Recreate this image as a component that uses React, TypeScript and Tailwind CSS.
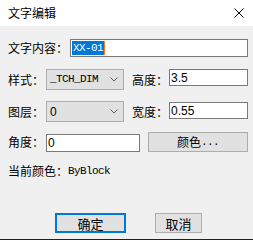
import React from 'react';

const cjk = { fontFamily: '"Noto Sans CJK SC", "Microsoft YaHei", sans-serif' };

const Chevron: React.FC = () => (
  <svg width="8" height="5" viewBox="0 0 8 5" className="shrink-0">
    <path d="M0.5 0.5 L4 4 L7.5 0.5" fill="none" stroke="#606060" strokeWidth="1" />
  </svg>
);

const TextEditDialog: React.FC = () => {
  return (
    <div
      className="w-[253px] h-[240px] flex flex-col bg-[#f0f0f0] text-[12px] leading-none text-black overflow-hidden"
      style={cjk}
    >
      {/* barra de título */}
      <div className="h-[26px] bg-white flex items-center justify-between pl-2 pr-[9px] shrink-0">
        <span className="text-[12px] pb-px">文字编辑</span>
        <svg width="10" height="10" viewBox="0 0 10 10">
          <path d="M0.5 0.5 L9.5 9.5 M9.5 0.5 L0.5 9.5" stroke="#000" strokeWidth="1" />
        </svg>
      </div>

      {/* contenido */}
      <div className="flex-1 flex flex-col pl-2 relative">
        <div className="flex items-center h-[18px] mt-[13px]">
          <span className="w-[62px]">文字内容：</span>
          <div className="w-[178px] h-[18px] bg-white border border-[#7a7a7a] flex items-center pl-px">
            <span className="bg-[#0078d7] text-white h-[14px] flex items-center px-px font-['Liberation_Mono'] text-[11px] tracking-[-0.6px]">
              XX-01
            </span>
            <span className="w-px h-[14px] bg-[#f08020]" />
          </div>
        </div>

        <div className="flex items-center h-[21px] mt-[12px]">
          <span className="w-[38px]">样式：</span>
          <div className="w-[78px] h-[21px] bg-[#e1e1e1] border border-[#adadad] flex items-center justify-between pl-[3px] pr-[5px]">
            <span className="font-['Liberation_Mono'] text-[11px] tracking-[-0.6px]">_TCH_DIM</span>
            <Chevron />
          </div>
          <span className="w-[37px] ml-2">高度：</span>
          <div className="w-[79px] h-[17px] self-start bg-white border border-[#7a7a7a] flex items-center pl-px font-['Liberation_Sans'] text-[12px]">
            3.5
          </div>
        </div>

        <div className="flex items-center h-[21px] mt-[11px]">
          <span className="w-[38px]">图层：</span>
          <div className="w-[78px] h-[21px] bg-[#e1e1e1] border border-[#adadad] flex items-center justify-between pl-[3px] pr-[5px]">
            <span className="font-['Liberation_Sans'] text-[12px]">0</span>
            <Chevron />
          </div>
          <span className="w-[37px] ml-2">宽度：</span>
          <div className="w-[79px] h-[17px] mt-px self-start bg-white border border-[#7a7a7a] flex items-center pl-px font-['Liberation_Sans'] text-[12px]">
            0.55
          </div>
        </div>

        <div className="flex items-center h-[20px] mt-[10px]">
          <span className="w-[38px]">角度：</span>
          <div className="w-[94px] h-[18px] mt-[2px] bg-white border border-[#7a7a7a] flex items-center pl-px font-['Liberation_Sans'] text-[12px]">
            0
          </div>
          <button className="w-[100px] h-[20px] ml-[8px] bg-[#e1e1e1] border border-[#adadad] flex items-center justify-center">
            颜色<span className="font-['Liberation_Mono'] text-[11px] tracking-[-0.6px]">...</span>
          </button>
        </div>

        <div className="flex items-center h-[14px] mt-[12px]">
          <span>当前颜色：</span>
          <span className="font-['Liberation_Mono'] text-[11px] tracking-[-0.6px]">ByBlock</span>
        </div>

        <div className="flex items-center h-[20px] mt-[35px] pl-[47px]">
          <button className="w-[71px] h-[20px] bg-[#e1e1e1] border-2 border-[#0078d7] flex items-center justify-center text-[13px]">
            确定
          </button>
          <button className="w-[47px] h-[20px] ml-[29px] bg-[#e1e1e1] border border-[#adadad] flex items-center justify-center text-[13px]">
            取消
          </button>
        </div>
      </div>
      <div className="h-px bg-[#202020] shrink-0" />
    </div>
  );
};

export default function App() {
  return <TextEditDialog />;
}
